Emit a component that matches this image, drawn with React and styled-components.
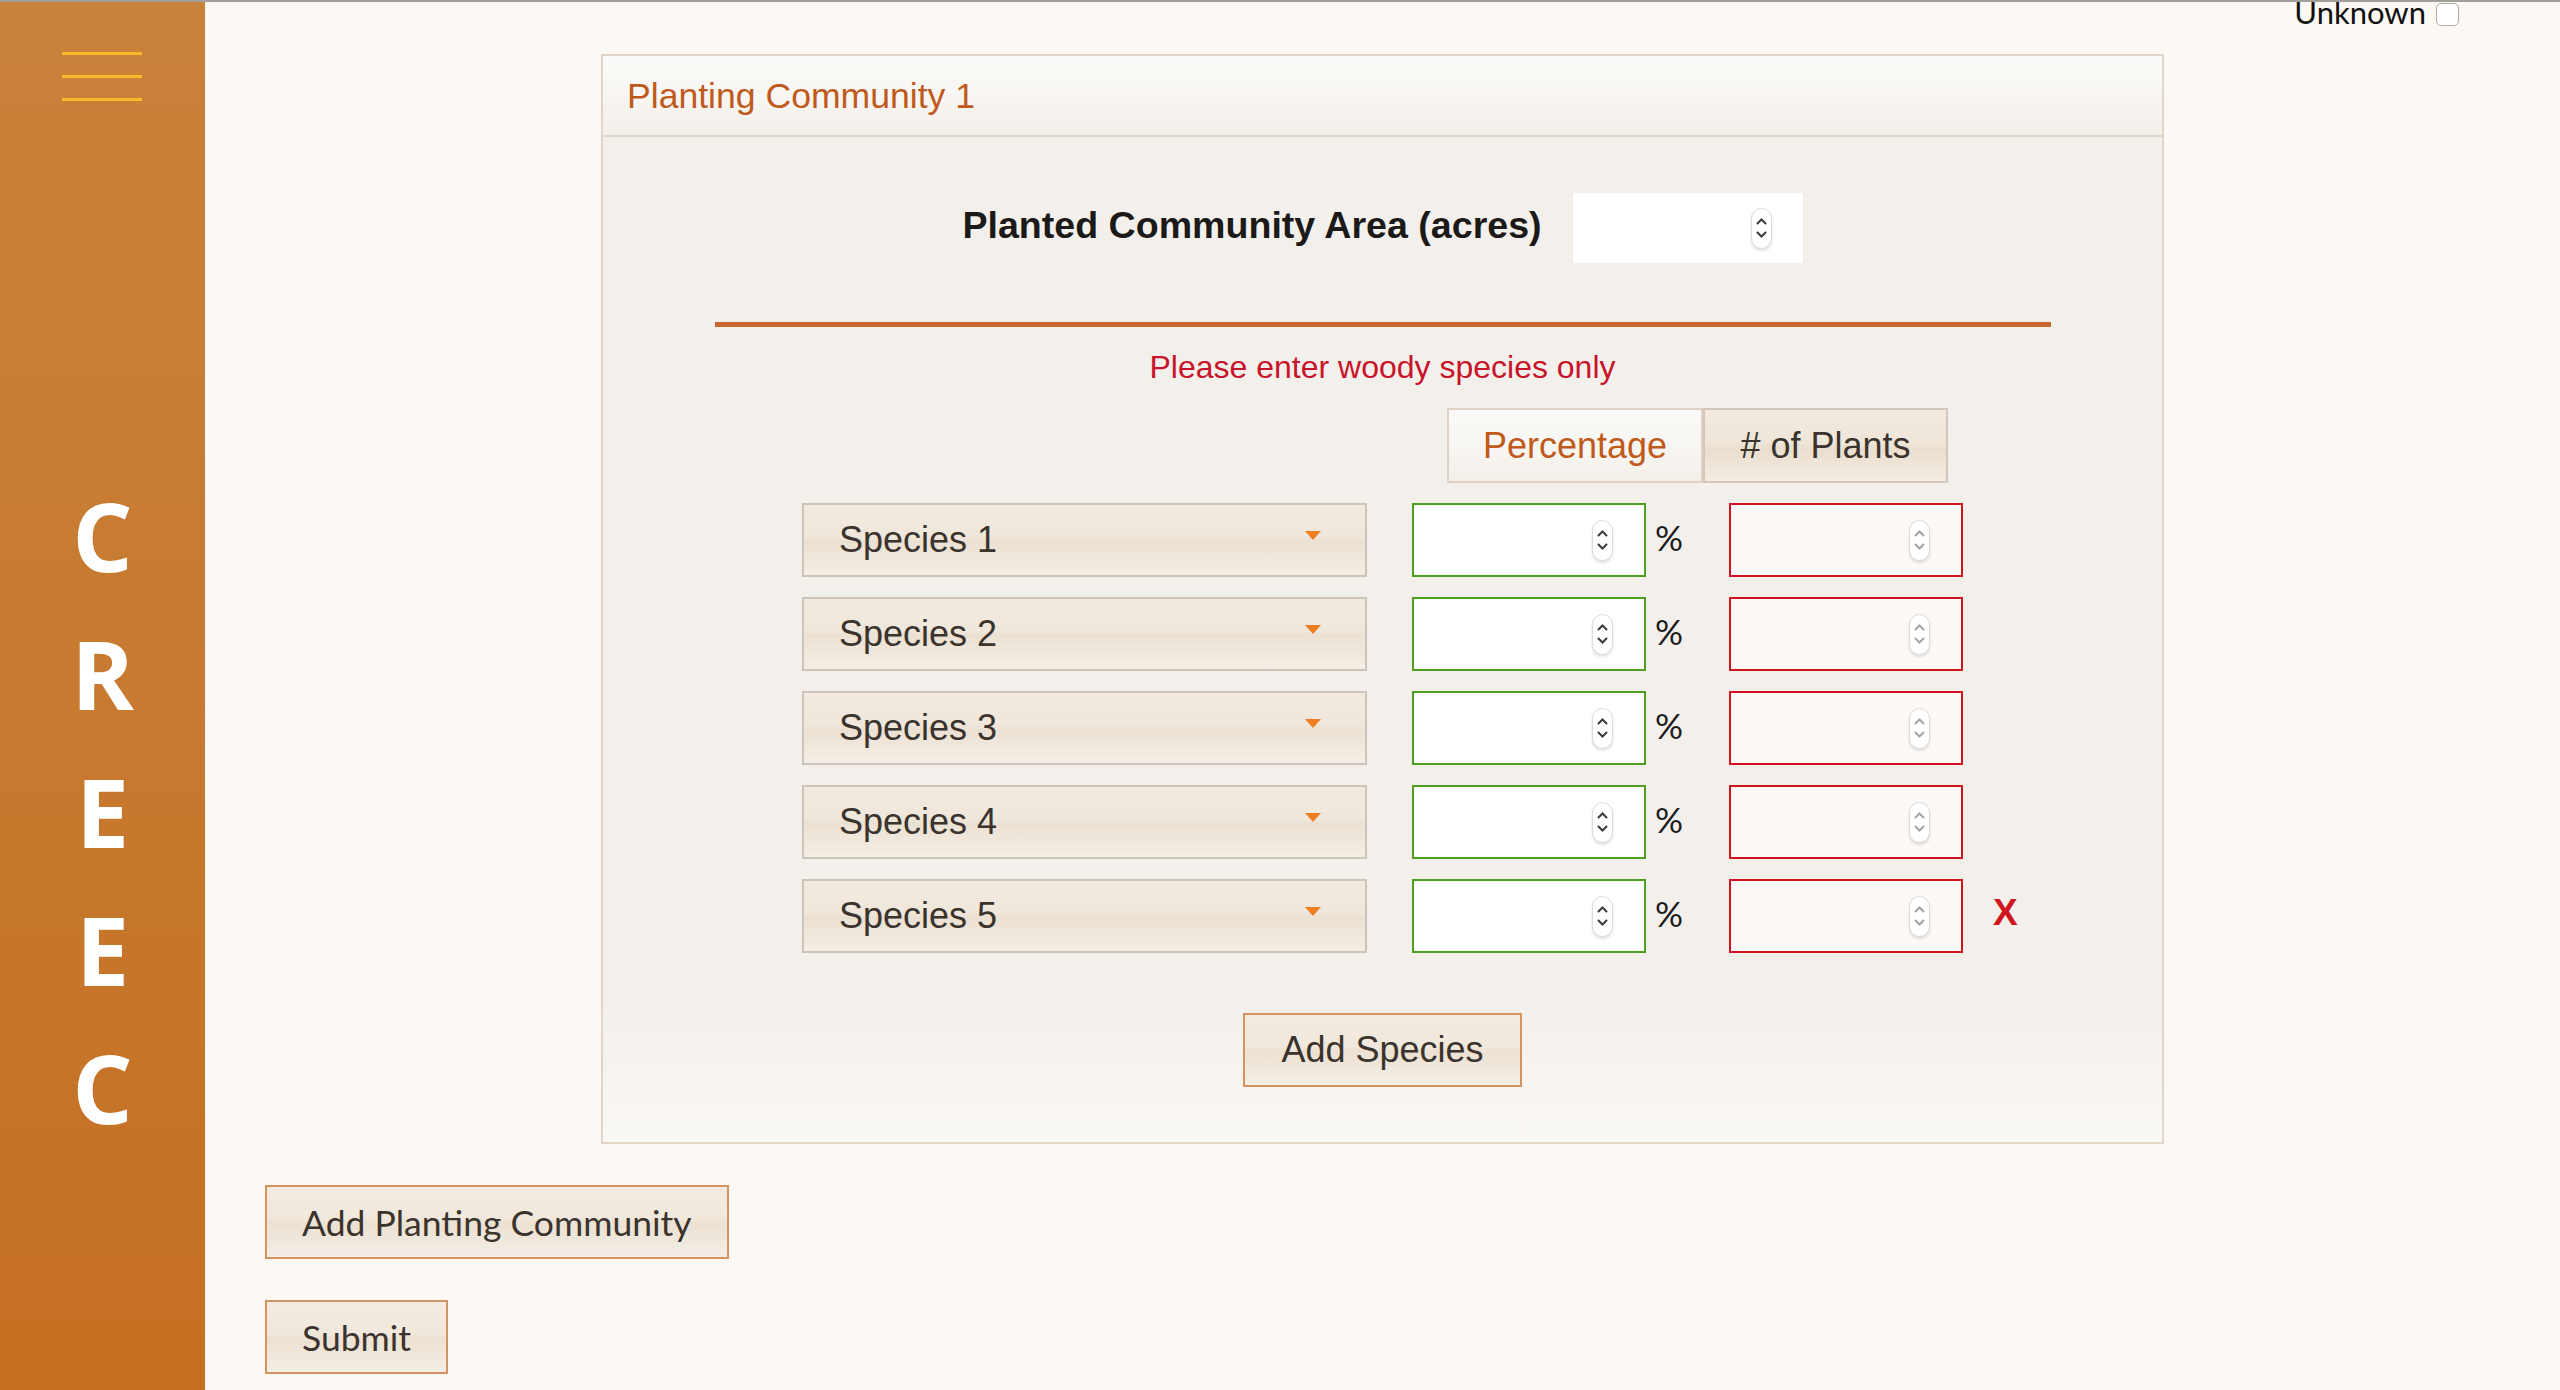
import React from "react";
import styled, { createGlobalStyle } from "styled-components";

const GlobalStyle = createGlobalStyle`
  html, body {
    margin: 0;
    padding: 0;
    background: #fcf9f5;
  }
  * {
    box-sizing: border-box;
  }
`;

const HELV = `"Liberation Sans", Arial, sans-serif`;
const ROUND = `Lato, "Open Sans", sans-serif`;

const Page = styled.div`
  display: flex;
  height: 1390px;
  overflow: hidden;
  border-top: 2px solid #a3a09c;
  background: #fcf9f5;
`;

const Sidebar = styled.aside`
  width: 205px;
  flex-shrink: 0;
  display: flex;
  flex-direction: column;
  background: linear-gradient(to bottom, #c9823a 0%, #c77a30 50%, #c56f22 100%);
`;

const Burger = styled.div`
  margin: 50px 0 0 62px;
  width: 80px;
  display: flex;
  flex-direction: column;
  gap: 20px;

  span {
    display: block;
    height: 3px;
    background: #f6b92b;
  }
`;

const Brand = styled.div`
  margin-top: 365px;
  display: flex;
  flex-direction: column;
  align-items: center;
  font-family: "Open Sans", sans-serif;
  font-weight: 700;
  font-size: 95px;
  line-height: 138px;
  color: #ffffff;
`;

const Main = styled.main`
  flex: 1;
  display: flex;
  flex-direction: column;
  align-items: flex-start;
  padding-left: 60px;
`;

const TopBar = styled.div`
  align-self: stretch;
  height: 52px;
  display: flex;
  justify-content: flex-end;
  align-items: flex-start;
  padding-right: 101px;
`;

const UnknownLabel = styled.label`
  display: flex;
  align-items: flex-start;
  gap: 10px;
  margin-top: -5px;
  font-family: ${ROUND};
  font-size: 31px;
  line-height: 30px;
  color: #111;
`;

const Check = styled.span`
  display: block;
  margin-top: 6px;
  width: 23px;
  height: 23px;
  border: 1px solid #aeaba7;
  border-radius: 5px;
  background: #fff;
`;

const Panel = styled.section`
  margin-left: 336px;
  width: 1563px;
  border: 2px solid #e2d4c6;
  display: flex;
  flex-direction: column;
`;

const PanelHeader = styled.header`
  height: 81px;
  border-bottom: 2px solid #e2d4c6;
  background: linear-gradient(to bottom, #fbfaf8 0%, #f9f7f4 40%, #f3efe9 100%);
  display: flex;
  align-items: center;
  padding: 2px 0 0 24px;
  font-family: ${HELV};
  font-size: 35.6px;
  color: #bf5a1c;
`;

const PanelBody = styled.div`
  display: flex;
  flex-direction: column;
  align-items: center;
  padding: 56px 0 55px;
  background: linear-gradient(to bottom, #f3f0eb 0%, #f3f0eb 86%, #faf8f5 100%);
`;

const AreaRow = styled.div`
  display: flex;
  align-items: center;
  gap: 31px;
  height: 70px;
`;

const AreaLabel = styled.span`
  margin-bottom: 6px;
  font-family: ${HELV};
  font-weight: 700;
  font-size: 37.6px;
  color: #1c1a19;
`;

const Field = styled.div`
  display: flex;
  align-items: center;
  width: ${({ $w }) => $w}px;
  height: ${({ $h }) => $h}px;
  padding-right: ${({ $pr }) => $pr}px;
  border: ${({ $border }) => ($border ? `2px solid ${$border}` : "none")};
  background: ${({ $bg }) => $bg};
`;

const FieldInput = styled.input`
  flex: 1;
  min-width: 0;
  height: 100%;
  border: none;
  outline: none;
  background: transparent;
  font-family: ${HELV};
  font-size: 32px;
`;

const SpinPill = styled.span`
  width: 21px;
  height: 41px;
  border: 1px solid #dcdcdc;
  border-radius: 11px;
  background: #fff;
  box-shadow: 0 2px 3px rgba(0, 0, 0, 0.12);
  display: flex;
  flex-direction: column;
  align-items: center;
  justify-content: center;
  gap: 6px;
`;

function Spinner({ color = "#3a3a3a" }) {
  return (
    <SpinPill>
      <svg width="11" height="7" viewBox="0 0 11 7">
        <path d="M1.5 5.5 L5.5 1.5 L9.5 5.5" fill="none" stroke={color} strokeWidth="2" strokeLinecap="round" />
      </svg>
      <svg width="11" height="7" viewBox="0 0 11 7">
        <path d="M1.5 1.5 L5.5 5.5 L9.5 1.5" fill="none" stroke={color} strokeWidth="2" strokeLinecap="round" />
      </svg>
    </SpinPill>
  );
}

const Divider = styled.div`
  margin-top: 59px;
  width: 1336px;
  height: 5px;
  background: #c9652e;
`;

const Notice = styled.p`
  margin: 22px 0 0;
  font-family: ${HELV};
  font-size: 32px;
  line-height: 37px;
  color: #c8142a;
`;

const Grid = styled.div`
  margin-top: 22px;
  width: 1161px;
  display: flex;
  flex-direction: column;
  gap: 20px;
`;

const Tabs = styled.div`
  display: flex;
  margin-left: 645px;
  height: 75px;
`;

const Tab = styled.div`
  width: ${({ $w }) => $w}px;
  display: flex;
  align-items: center;
  justify-content: center;
  font-family: ${HELV};
  font-size: 36px;
  border: 2px solid ${({ $active }) => ($active ? "#dfd1c3" : "#d3c7ba")};
  color: ${({ $active }) => ($active ? "#bf5a1c" : "#3b332d")};
  background: ${({ $active }) =>
    $active
      ? "linear-gradient(to bottom, #fbfaf8 0%, #f8f6f2 50%, #f3efe9 100%)"
      : "linear-gradient(to bottom, #f2eae0 0%, #efe6da 45%, #eadfce 55%, #f2ebe2 100%)"};
`;

const Row = styled.div`
  position: relative;
  display: flex;
  align-items: center;
  height: 74px;
`;

const Select = styled.div`
  width: 565px;
  height: 74px;
  margin-right: 45px;
  display: flex;
  align-items: center;
  justify-content: space-between;
  padding: 0 44px 0 35px;
  border: 2px solid #cdc4b9;
  background: linear-gradient(to bottom, #f2eae0 0%, #f0e7dc 45%, #ebe1d3 52%, #f4eee6 100%);
  font-family: ${HELV};
  font-size: 36px;
  color: #3b332d;
`;

const Caret = styled.span`
  width: 0;
  height: 0;
  margin-top: -10px;
  border-left: 8px solid transparent;
  border-right: 8px solid transparent;
  border-top: 9px solid #ef7d22;
`;

const Pct = styled.span`
  width: 41px;
  padding-left: 9px;
  margin-right: 42px;
  margin-top: -7px;
  font-family: ${ROUND};
  font-size: 35px;
  color: #1d1d1d;
`;

const Remove = styled.span`
  position: absolute;
  left: calc(100% + 30px);
  top: 14px;
  font-family: ${HELV};
  font-weight: 700;
  font-size: 37px;
  line-height: 40px;
  color: #d0161e;
`;

const Button = styled.button`
  height: 74px;
  padding: 0 ${({ $px }) => $px}px;
  border: 2px solid #d4935f;
  border-radius: 0;
  background: linear-gradient(to bottom, #f3eae1 0%, #f1e8dd 45%, #ece1d2 52%, #f3eee6 100%);
  font-family: ${({ $round }) => ($round ? ROUND : HELV)};
  font-size: ${({ $round }) => ($round ? 35.5 : 36)}px;
  color: #3b332d;
  margin-top: ${({ $mt }) => $mt}px;
  cursor: pointer;
`;

const species = ["Species 1", "Species 2", "Species 3", "Species 4", "Species 5"];

export default function App() {
  return (
    <>
      <GlobalStyle />
      <Page>
        <Sidebar>
          <Burger>
            <span />
            <span />
            <span />
          </Burger>
          <Brand>
            {"CREEC".split("").map((ch, i) => (
              <span key={i}>{ch}</span>
            ))}
          </Brand>
        </Sidebar>
        <Main>
          <TopBar>
            <UnknownLabel>
              Unknown
              <Check />
            </UnknownLabel>
          </TopBar>
          <Panel>
            <PanelHeader>Planting Community 1</PanelHeader>
            <PanelBody>
              <AreaRow>
                <AreaLabel>Planted Community Area (acres)</AreaLabel>
                <Field $w={230} $h={70} $pr={31} $bg="#ffffff">
                  <FieldInput />
                  <Spinner />
                </Field>
              </AreaRow>
              <Divider />
              <Notice>Please enter woody species only</Notice>
              <Grid>
                <Tabs>
                  <Tab $w={256} $active>Percentage</Tab>
                  <Tab $w={245}>
                    # of Plants
                  </Tab>
                </Tabs>
                {species.map((name, i) => (
                  <Row key={name}>
                    <Select>
                      {name}
                      <Caret />
                    </Select>
                    <Field $w={234} $h={74} $pr={31} $border="#4d9f22" $bg="#ffffff">
                      <FieldInput />
                      <Spinner />
                    </Field>
                    <Pct>%</Pct>
                    <Field $w={234} $h={74} $pr={31} $border="#d0141f" $bg="#fcf9f7">
                      <FieldInput />
                      <Spinner color="#a5a5a5" />
                    </Field>
                    {i === species.length - 1 && <Remove>X</Remove>}
                  </Row>
                ))}
              </Grid>
              <Button $px={36} $mt={60}>Add Species</Button>
            </PanelBody>
          </Panel>
          <Button $round $px={35} $mt={41}>Add Planting Community</Button>
          <Button $round $px={35} $mt={41}>Submit</Button>
        </Main>
      </Page>
    </>
  );
}
